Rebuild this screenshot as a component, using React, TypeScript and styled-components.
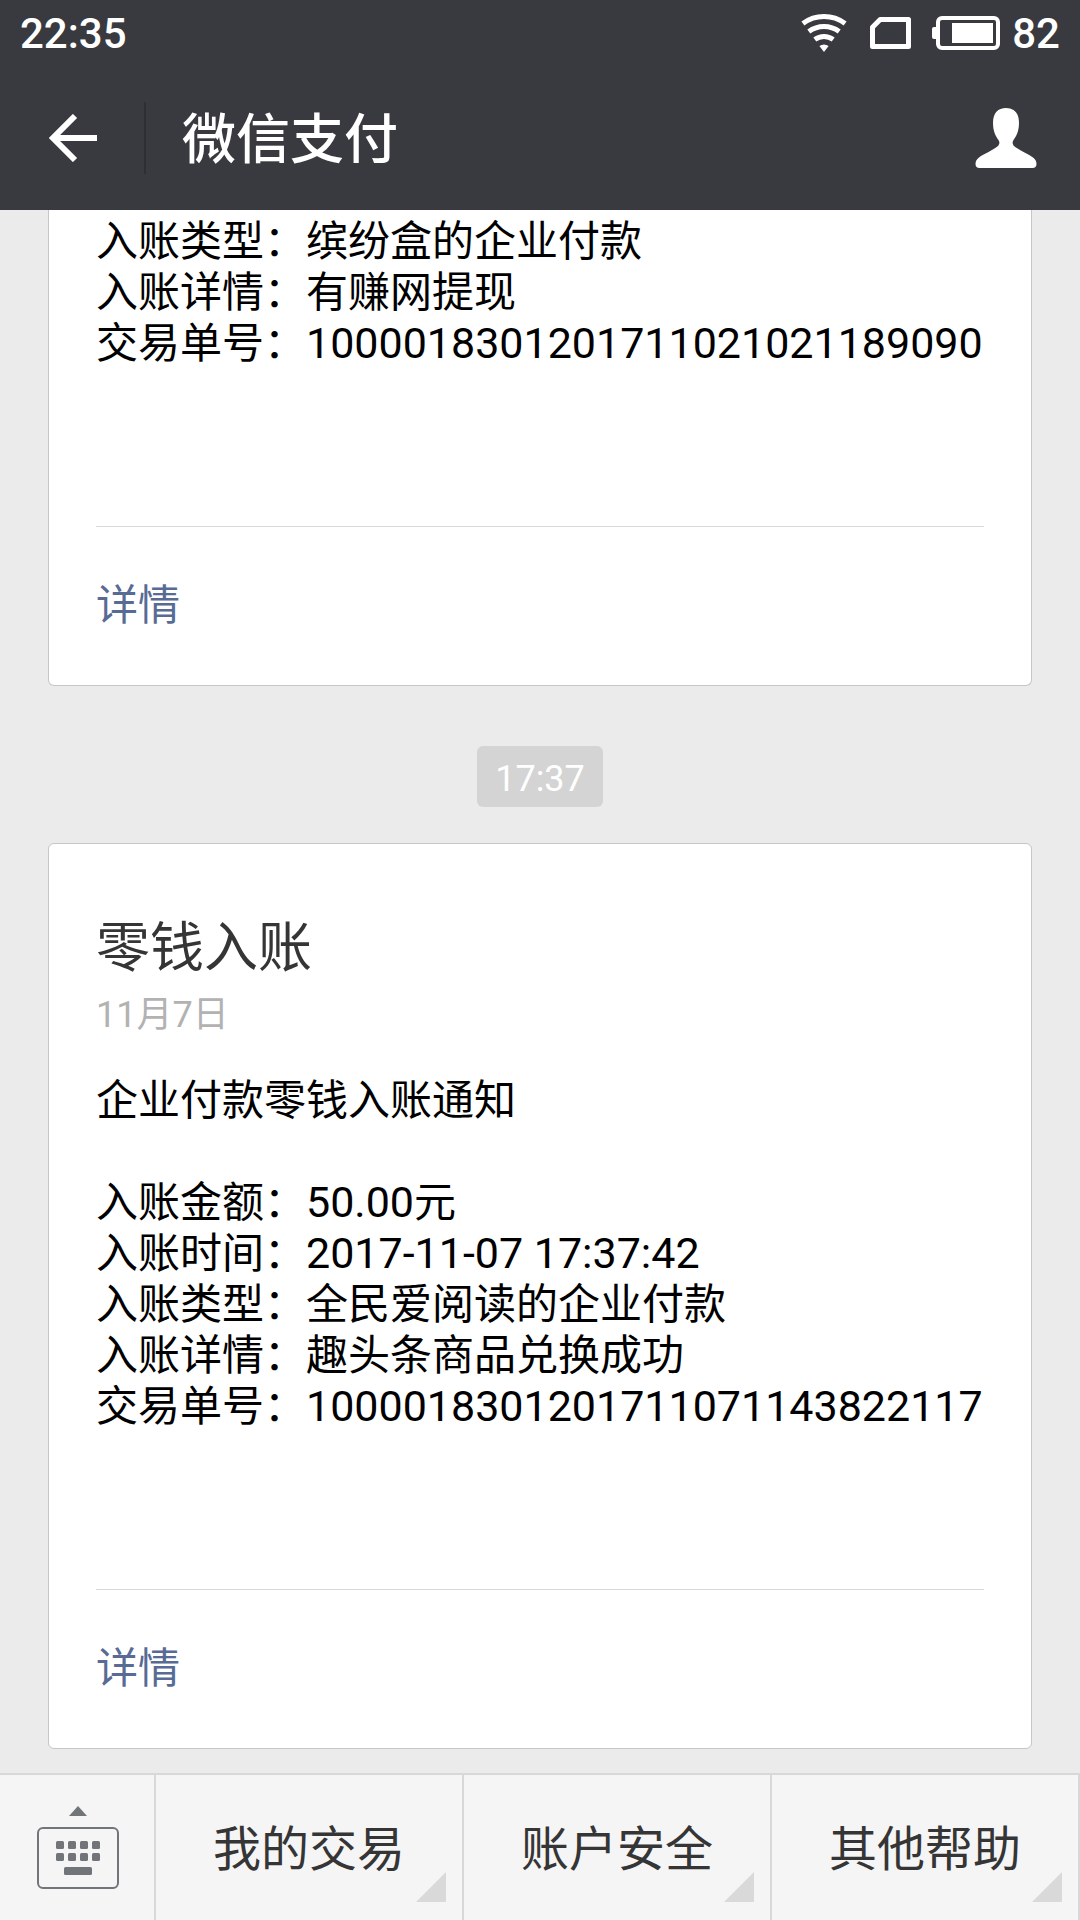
import React from "react";
import styled, { createGlobalStyle } from "styled-components";

const GlobalStyle = createGlobalStyle`
  * { box-sizing: border-box; }
  body {
    margin: 0;
    background: #ebebeb;
    font-family: Roboto, "Noto Sans CJK SC", sans-serif;
  }
  h1, h2, p { margin: 0; font-weight: 400; }
  svg { display: block; flex: none; }
`;

const Page = styled.div`
  display: flex;
  flex-direction: column;
  min-height: 100vh;
`;

const TopArea = styled.header`
  background: #393a3f;
  color: #fff;
`;

const StatusBar = styled.div`
  display: flex;
  align-items: center;
  justify-content: space-between;
  height: 66px;
  padding: 0 20px;
`;

const StatusText = styled.span`
  padding-top: 2px;
  font-size: 42px;
  font-weight: 500;
  line-height: 50px;
`;

const StatusIcons = styled.div`
  display: flex;
  align-items: center;
`;

const WifiSlot = styled.span`
  margin-right: 23px;
`;

const SimSlot = styled.span`
  margin-right: 21px;
`;

const BatterySlot = styled.span`
  margin-right: 12px;
`;

const TitleBar = styled.div`
  display: flex;
  align-items: center;
  height: 144px;
  padding-right: 43px;
`;

const IconButton = styled.button`
  display: flex;
  align-items: center;
  justify-content: center;
  border: 0;
  padding: 0;
  background: none;
  color: inherit;
`;

const BackButton = styled(IconButton)`
  width: 146px;
  height: 72px;
  padding-left: 2px;
  border-right: 2px solid #2e2f33;
`;

const Title = styled.h1`
  flex: 1;
  padding: 6px 0 0 36px;
  font-size: 54px;
  font-weight: 500;
  line-height: 72px;
`;

const Messages = styled.main`
  display: flex;
  flex: 1;
  flex-direction: column;
  align-items: center;
  padding: 0 48px 24px;
`;

const Card = styled.article<{ $continued?: boolean }>`
  width: 100%;
  padding: ${(p) => (p.$continued ? "6px" : "73px")} 47px 0;
  background: #fff;
  border: 1px solid #c6c6c6;
  border-radius: 6px;
  ${(p) => p.$continued && "border-top: 0; border-top-left-radius: 0; border-top-right-radius: 0;"}
`;

const CardTitle = styled.h2`
  color: #353535;
  font-size: 54px;
  line-height: 64px;
`;

const CardDate = styled.p`
  padding: 11px 0 37px;
  color: #b2b2b2;
  font-size: 36px;
  line-height: 46px;
`;

const CardBody = styled.p`
  color: #000;
  font-size: 42px;
  line-height: 51px;
`;

const BodyLine = styled.span`
  display: block;
  height: 51px;
`;

const Figures = styled.span`
  font-size: 43px;
  line-height: 1;
`;

const CardFooter = styled.div`
  margin-top: 157px;
  border-top: 1px solid #d9d9d9;
`;

const DetailLink = styled.a`
  display: block;
  color: #576b95;
  font-size: 42px;
  line-height: 158px;
  text-decoration: none;
`;

const TimeStamp = styled.time`
  margin: 60px 0 36px;
  padding: 5px 18px 0;
  border-radius: 6px;
  background: #d4d4d4;
  color: #fff;
  font-size: 36px;
  line-height: 56px;
`;

const MenuBar = styled.nav`
  display: flex;
  height: 147px;
  border-top: 2px solid #d8d8d8;
  background: #f5f5f5;
`;

const KeyboardButton = styled(IconButton)`
  width: 156px;
  padding-left: 2px;
  border-right: 2px solid #d8d8d8;
  color: #717479;
`;

const MenuButton = styled.button`
  position: relative;
  flex: 1;
  padding: 4px 0 0;
  border: 0;
  border-right: 2px solid #d8d8d8;
  background: none;
  color: #353535;
  font-family: inherit;
  font-size: 48px;
  line-height: 64px;

  &::after {
    content: "";
    position: absolute;
    right: 16px;
    bottom: 18px;
    width: 30px;
    height: 30px;
    background: #d9d9d9;
    clip-path: polygon(100% 0, 100% 100%, 0 100%);
  }
`;

const WifiIcon = () => (
  <svg width="46" height="40" viewBox="0 0 46 40" fill="none" stroke="#fff" strokeWidth="5">
    <path d="M1.9 10.5A35.5 35.5 0 0 1 44.1 10.5" />
    <path d="M7.8 18.5A25.5 25.5 0 0 1 38.2 18.5" />
    <path d="M13.8 26.5A15.5 15.5 0 0 1 32.2 26.5" />
    <path d="M23 39L18.4 33A8 8 0 0 1 27.6 33Z" fill="#fff" stroke="none" />
  </svg>
);

const SimIcon = () => (
  <svg width="41" height="32" viewBox="0 0 41 32" fill="none" stroke="#fff" strokeWidth="5" strokeLinejoin="round">
    <path d="M2.5 10.2L10.2 2.5H38.5V29.5H2.5Z" />
  </svg>
);

const BatteryIcon = () => (
  <svg width="68" height="34" viewBox="0 0 68 34" fill="#fff">
    <rect x="6" y="2" width="60" height="30" rx="4" fill="none" stroke="#fff" strokeWidth="4" />
    <path d="M5 11H2Q0 11 0 13V21Q0 23 2 23H5Z" />
    <rect x="20" y="7" width="41" height="20" />
  </svg>
);

const BackIcon = () => (
  <svg width="50" height="48" viewBox="0 0 50 48" fill="none" stroke="#fff" strokeWidth="6">
    <path d="M27 2L5 24L27 46M5 24H49" />
  </svg>
);

const PersonIcon = () => (
  <svg width="62" height="60" viewBox="0 0 62 60" fill="#fff">
    <path d="M31 0C23 0 18 5 18 15C18 23 20.500 28 23.500 32C25 34.500 24.500 36 23 38C17 43 9 45.500 4 49.500C1.500 51.500 .5 53.500 .5 56C.5 58.500 2 60 4.500 60H57.500C60 60 61.500 58.500 61.500 56C61.500 53.500 60.500 51.500 58 49.500C53 45.500 45 43 39 38C37.500 36 37 34.500 38.500 32C41.500 28 44 23 44 15C44 5 39 0 31 0Z" />
  </svg>
);

const KeyboardIcon = () => (
  <svg width="82" height="84" viewBox="0 0 82 84" fill="currentColor">
    <path d="M41 0L50 10H32Z" />
    <rect x="1" y="22" width="80" height="60" rx="5" fill="none" stroke="currentColor" strokeWidth="2" />
    {[35, 47].map((y) =>
      [19, 31, 43, 55].map((x) => <rect key={`${x}-${y}`} x={x} y={y} width="8" height="8" rx="1.500" />)
    )}
    <rect x="27" y="61" width="28" height="8" rx="1.500" />
  </svg>
);

const menuItems = ["我的交易", "账户安全", "其他帮助"];

type Line = { text?: string; figures?: string; unit?: string };

const previousMessage: Line[] = [
  { text: "入账类型：缤纷盒的企业付款" },
  { text: "入账详情：有赚网提现" },
  { text: "交易单号：", figures: "1000018301201711021021189090" },
];

const latestMessage: Line[] = [
  { text: "企业付款零钱入账通知" },
  {},
  { text: "入账金额：", figures: "50.00", unit: "元" },
  { text: "入账时间：", figures: "2017-11-07 17:37:42" },
  { text: "入账类型：全民爱阅读的企业付款" },
  { text: "入账详情：趣头条商品兑换成功" },
  { text: "交易单号：", figures: "1000018301201711071143822117" },
];

const MessageBody = ({ lines }: { lines: Line[] }) => (
  <CardBody>
    {lines.map(({ text, figures, unit }, i) => (
      <BodyLine key={i}>
        {text}
        {figures && <Figures>{figures}</Figures>}
        {unit}
      </BodyLine>
    ))}
  </CardBody>
);

export default function App() {
  return (
    <Page lang="zh-CN">
      <GlobalStyle />
      <TopArea>
        <StatusBar>
          <StatusText>22:35</StatusText>
          <StatusIcons>
            <WifiSlot><WifiIcon /></WifiSlot>
            <SimSlot><SimIcon /></SimSlot>
            <BatterySlot><BatteryIcon /></BatterySlot>
            <StatusText>82</StatusText>
          </StatusIcons>
        </StatusBar>
        <TitleBar>
          <BackButton aria-label="返回"><BackIcon /></BackButton>
          <Title>微信支付</Title>
          <IconButton aria-label="账号资料"><PersonIcon /></IconButton>
        </TitleBar>
      </TopArea>

      <Messages>
        <Card $continued>
          <MessageBody lines={previousMessage} />
          <CardFooter>
            <DetailLink href="#detail">详情</DetailLink>
          </CardFooter>
        </Card>

        <TimeStamp>17:37</TimeStamp>

        <Card>
          <CardTitle>零钱入账</CardTitle>
          <CardDate>11月7日</CardDate>
          <MessageBody lines={latestMessage} />
          <CardFooter>
            <DetailLink href="#detail">详情</DetailLink>
          </CardFooter>
        </Card>
      </Messages>

      <MenuBar>
        <KeyboardButton aria-label="键盘"><KeyboardIcon /></KeyboardButton>
        {menuItems.map((item) => (
          <MenuButton key={item}>{item}</MenuButton>
        ))}
      </MenuBar>
    </Page>
  );
}
